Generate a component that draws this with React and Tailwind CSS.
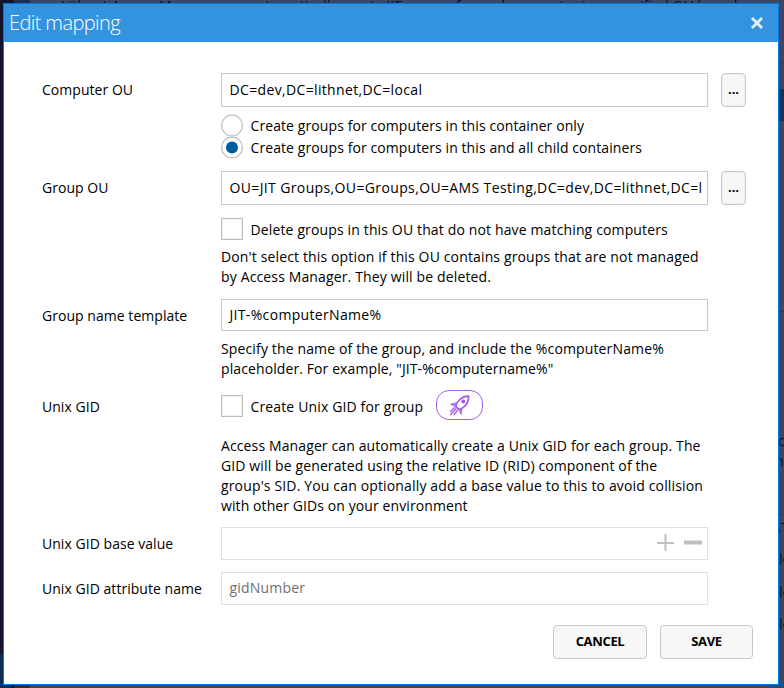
const inputBase = "flex w-[487px] shrink-0 items-center border pl-[7.5px] pb-[2px] whitespace-nowrap";

function Row({ label, className, labelClass, children }) {
  return (
    <div className={"flex " + className}>
      <div className={"w-[179px] shrink-0 leading-5 tracking-[0.04px] whitespace-nowrap " + labelClass}>{label}</div>
      <div className="flex min-w-0 grow flex-col">{children}</div>
    </div>
  );
}

function BrowseButton() {
  return (
    <button className="ml-[13px] flex h-[34px] w-[25px] items-center justify-center rounded-[4px] border border-[#c8c8c8] bg-[#f7f7f7] pb-px text-[13px] font-bold shadow-[inset_0_0_0_1px_#eeeeee]">
      ...
    </button>
  );
}

function Radio({ checked }) {
  return (
    <svg className="-my-px h-[23px] w-[22px] shrink-0" viewBox="0 0 22 23">
      <circle cx="11" cy="11.5" r="10.4" fill="#fff" stroke="#bebebe" strokeWidth="1.1" />
      {checked && <circle cx="11" cy="11.5" r="6" fill="#005a9e" />}
    </svg>
  );
}

function CheckBox({ className = "" }) {
  return <span className={"h-[22px] w-[22px] shrink-0 border border-[#bcbcbc] bg-white shadow-[inset_0_0_0_1px_#f0f0f0] " + className} />;
}

function Rocket() {
  return (
    <svg className="h-[21px] w-[21px]" viewBox="0 0 21 21" fill="none" stroke="#a45ce6" strokeLinecap="round" strokeLinejoin="round">
      <path d="M6.600 11.200C8 6 12.500 1.300 19.600 1.200 19.900 8 15.500 12.500 10 14.600Z" strokeWidth="1.700" />
      <circle cx="14.300" cy="6.500" r="2" fill="#a45ce6" stroke="none" />
      <path d="M6.200 8 1.500 9.200 5.500 10.800ZM13 14.500l-.8 5-1.700-3.500Z" fill="#a45ce6" strokeWidth=".7" />
      <path d="M5.500 12.500 1.500 16.500M7 13.800l-5.500 6M8.300 15.500 5 19.800" strokeWidth="1.300" />
    </svg>
  );
}

function PageBehind() {
  return (
    <div className="absolute inset-0 overflow-hidden bg-[#414660] text-[#0b0d28]">
      <div className="absolute top-0 left-0 h-full w-[14px] bg-[#12152d]" />
      <div className="absolute top-0 left-[14px] h-full w-4 bg-[#292d49]" />
      <div className="absolute top-[654px] left-0 h-[34px] w-3 bg-[#0c2c58]" />
      <div className="absolute -top-[4px] left-[61px] leading-5 tracking-[0.1px] whitespace-nowrap">
        Lithnet Access Manager can automatically create JIT groups for each computer in a specified OU based
      </div>
      <div className="absolute top-[62px] right-0 h-px w-[6px] bg-[#333852]" />
      <div className="absolute top-[89px] right-0 h-8 w-[6px] bg-[#15325f]" />
      <div className="absolute top-[311px] right-0 h-px w-[6px] bg-[#333852]" />
      <div className="absolute top-[514px] right-0 h-px w-[6px] bg-[#333852]" />
      <div className="absolute top-[431px] left-[778px] leading-5">c</div>
      <div className="absolute top-[451px] left-[775px] leading-5">h</div>
      <div className="absolute top-[518px] left-[772px] leading-5">AT</div>
      <div className="absolute top-[549px] left-[779px] leading-5">le</div>
      <div className="absolute top-[582px] left-[779px] leading-5">le</div>
      <div className="absolute top-[614px] left-[779px] leading-5">le</div>
    </div>
  );
}

export default function App() {
  return (
    <div className="relative flex h-[688px] w-[784px] overflow-hidden pt-[3px] pl-[3px] font-['Open_Sans','Noto_Sans',sans-serif] text-[14px] text-black">
      <PageBehind />
      <main className="relative flex h-[682px] w-[776px] flex-col border border-[#0078e0] bg-white">
        <header className="flex h-[38px] shrink-0 items-center justify-between bg-[#3393df] pr-[14px] pl-[5px] text-white">
          <h1 className="text-[20px] leading-none font-light tracking-[-0.6px]">Edit mapping</h1>
          <svg className="-mt-px mr-px h-3 w-3" viewBox="0 0 12 12" stroke="#e2f0fb" strokeWidth="2.800">
            <path d="m1 1 10 10M11 1 1 11" />
          </svg>
        </header>
        <div className="flex flex-col pl-[38px]">
          <Row label="Computer OU" className="mt-[31px]" labelClass="mt-[7px]">
            <div className="flex">
              <div className={inputBase + " h-[34px] border-[#c8c8c8] tracking-[0.35px]"}>DC=dev,DC=lithnet,DC=local</div>
              <BrowseButton />
            </div>
            <div className="mt-[7px] flex h-[22px] items-center gap-[7.5px] tracking-[0.09px] whitespace-nowrap"><Radio />Create groups for computers in this container only</div>
            <div className="flex h-[22px] items-center gap-[7.5px] tracking-[0.09px] whitespace-nowrap"><Radio checked />Create groups for computers in this and all child containers</div>
          </Row>
          <Row label="Group OU" className="mt-[13px]" labelClass="mt-[7px]">
            <div className="flex">
              <div className={inputBase + " h-[34px] border-[#c8c8c8] pr-[5px] tracking-[0.37px]"}>
                <span className="overflow-hidden">OU=JIT Groups,OU=Groups,OU=AMS Testing,DC=dev,DC=lithnet,DC=local</span>
              </div>
              <BrowseButton />
            </div>
            <div className="mt-[13px] flex h-[22px] items-center gap-[7.5px] tracking-[0.14px] whitespace-nowrap"><CheckBox />Delete groups in this OU that do not have matching computers</div>
            <p className="mt-[7px] leading-5 tracking-[0.14px] whitespace-nowrap">Don't select this option if this OU contains groups that are not managed<br />by Access Manager. They will be deleted.</p>
          </Row>
          <Row label="Group name template" className="mt-[12px]" labelClass="mt-[7px]">
            <div className={inputBase + " h-[32px] border-[#c8c8c8] pb-0 tracking-[0.33px]"}>JIT-%computerName%</div>
            <p className="mt-[8px] leading-5 tracking-[0.14px] whitespace-nowrap">Specify the name of the group, and include the %computerName%<br /><span className="tracking-[0.1px]">placeholder. For example, "JIT-%computername%"</span></p>
          </Row>
          <Row label="Unix GID" className="mt-[11px]" labelClass="mt-[7px]">
            <div className="flex h-[30px] items-center gap-[7.5px] whitespace-nowrap">
              <CheckBox className="mt-[2px]" />
              <span className="mt-[2px] tracking-[0.14px]">Create Unix GID for group</span>
              <span className="ml-[5px] flex h-[30px] w-[47px] items-center justify-center rounded-[13px] border border-[#a45ce6]"><Rocket /></span>
            </div>
            <p className="mt-[16px] leading-5 whitespace-nowrap">
              <span className="tracking-[0.12px]">Access Manager can automatically create a Unix GID for each group. The</span><br />
              <span className="tracking-[0.12px]">GID will be generated using the relative ID (RID) component of the</span><br />
              <span className="tracking-[0.15px]">group's SID. You can optionally add a base value to this to avoid collision</span><br />
              <span className="tracking-[0.09px]">with other GIDs on your environment</span>
            </p>
          </Row>
          <Row label="Unix GID base value" className="mt-[11px]" labelClass="mt-[7px]">
            <div className={inputBase + " h-[33px] justify-end border-[#e0e0e0] pr-[5px] pb-0"}>
              <svg className="h-[18px] w-[45px]" viewBox="0 0 45 18" fill="#c0c0c0">
                <path d="M0 8h17v2H0zM7.500 0h2v17h-2zM27 6.500h18v4H27z" />
              </svg>
            </div>
          </Row>
          <Row label="Unix GID attribute name" className="mt-[12px]" labelClass="mt-[7px]">
            <div className={inputBase + " h-[33px] border-[#e0e0e0] pb-0 tracking-[0.2px] text-[#707070]"}>gidNumber</div>
          </Row>
        </div>
        <footer className="mt-5 flex justify-end gap-[13px] pr-[25px] text-[13px] font-bold tracking-[-0.35px]">
          <button className="h-[34px] w-[94px] rounded-[4px] border border-[#c8c8c8] bg-[#f7f7f7]">CANCEL</button>
          <button className="h-[34px] w-[93px] rounded-[4px] border border-[#c8c8c8] bg-[#f7f7f7]">SAVE</button>
        </footer>
      </main>
    </div>
  );
}
